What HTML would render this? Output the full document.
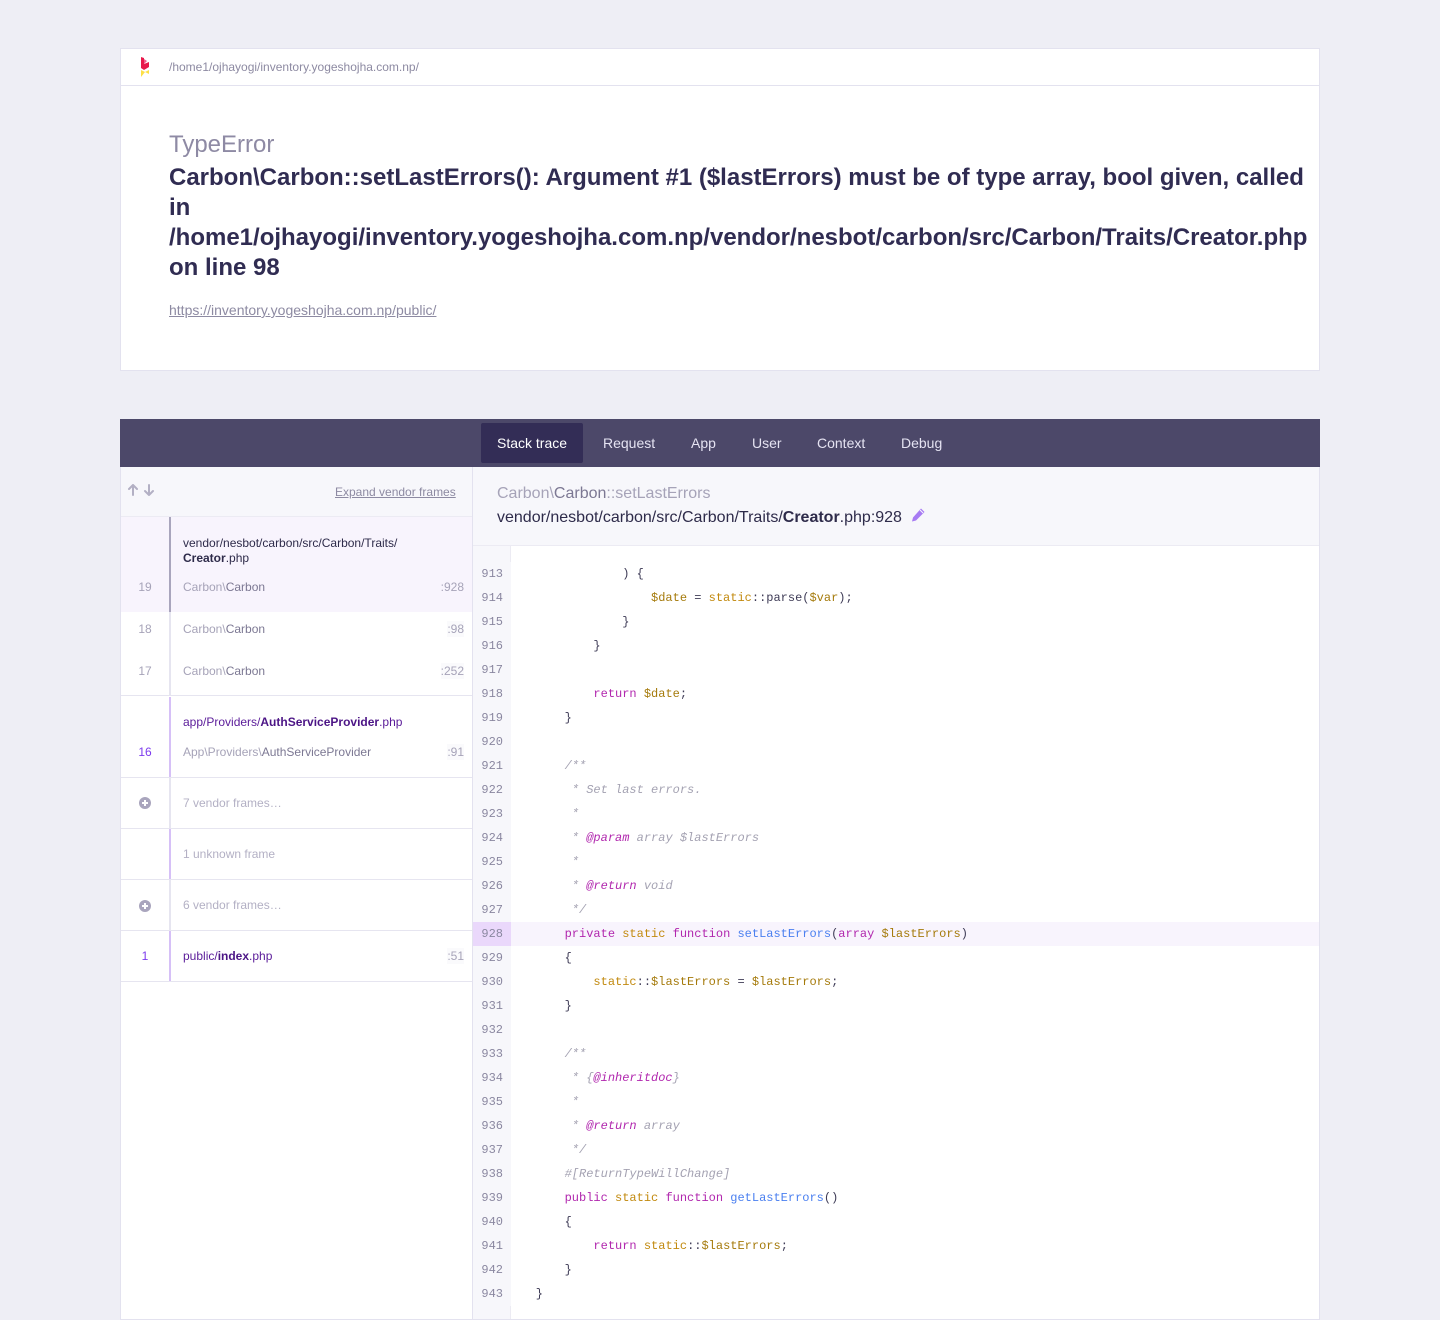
<!DOCTYPE html>
<html><head><meta charset="utf-8"><style>
*{box-sizing:border-box;margin:0;padding:0}
body{width:1440px;height:1320px;background:#eeeef5;font-family:"Liberation Sans",sans-serif;position:relative;overflow:hidden;color:#2e2b4a}
.abs{position:absolute}
.card{left:120px;top:48px;width:1200px;height:323px;background:#fff;border:1px solid #e3e2ef}
.hdr{left:0;top:0;width:1198px;height:37px;border-bottom:1px solid #e3e2ef}
.nav{left:120px;top:419px;width:1200px;height:48px;background:#4c4869}
.tab{top:4px;height:40px;line-height:40px;font-size:14px;color:#e5e3f2;padding:0 16px;white-space:nowrap}
.panel{left:120px;top:467px;width:1200px;height:853px;background:#fff;border-left:1px solid #e3e2ef;border-right:1px solid #e3e2ef;border-bottom:1px solid #e3e2ef}
.left{left:0;top:0;width:352px;height:853px;border-right:1px solid #e3e2ef}
.fr{left:0;width:351px;border-bottom:1px solid #e6e5f0;font-size:12px}
.num{position:absolute;left:0;width:48px;text-align:center;font-size:12px;color:#a6a3b8}
.bar{position:absolute;left:48px;top:0;bottom:0;width:2px;background:#e6e5f0}
.cls{position:absolute;left:62px;color:#a6a3b8}
.cls b{font-weight:normal;color:#7c7893}
.ln{position:absolute;right:8px;color:#a6a3b8;background:#fafafc;padding:1px 0}
.code{font-family:"Liberation Mono",monospace;font-size:12px}
.row{position:absolute;left:0;width:846px;height:24px;line-height:24px}
.g{position:absolute;left:0;width:38px;height:24px;background:#f7f7fb;text-align:right;padding-right:8px;color:#8a87a0}
.t{position:absolute;left:34px;white-space:pre;color:#3e3b56}
.k{color:#b127ae}.s{color:#c28a0f}.v{color:#a57a0b}.f{color:#4a7ff0}.c{color:#a4a2b2;font-style:italic}.ct{color:#b127ae;font-style:italic}
</style></head><body>

<div class="abs card">
  <div class="abs hdr">
    <svg class="abs" style="left:18px;top:8px" width="14" height="22" viewBox="0 0 14 22">
      <path d="M2 0 L5 1 L5 7 L10 5 L10 10 L5 13 L2 11 Z" fill="#e8194b"/>
      <path d="M5 2 L8 4 L5 7Z" fill="#f05a8a"/>
      <path d="M2 13 L6 15 L10 13 L10 17 L6 15 L2 20 Z" fill="#fde047"/>
    </svg>
    <div class="abs" style="left:48px;top:11px;font-size:12px;color:#8d8aa2">/home1/ojhayogi/inventory.yogeshojha.com.np/</div>
  </div>
  <div class="abs" style="left:48px;top:82px;font-size:24px;color:#8e8aa4">TypeError</div>
  <div class="abs" style="left:48px;top:114px;font-size:24px;font-weight:bold;line-height:30px;color:#302c52;width:1150px">Carbon\Carbon::setLastErrors(): Argument #1 ($lastErrors) must be of type array, bool given, called<br>in<br>/home1/ojhayogi/inventory.yogeshojha.com.np/vendor/nesbot/carbon/src/Carbon/Traits/Creator.php<br>on line 98</div>
  <div class="abs" style="left:48px;top:253px;font-size:14px;color:#8d8aa2;text-decoration:underline">https://inventory.yogeshojha.com.np/public/</div>
</div>

<div class="abs nav">
  <div class="abs tab" style="left:361px;width:102px;background:#332d56;border-radius:2px;color:#fff">Stack trace</div>
  <div class="abs tab" style="left:467px">Request</div>
  <div class="abs tab" style="left:555px">App</div>
  <div class="abs tab" style="left:616px">User</div>
  <div class="abs tab" style="left:681px">Context</div>
  <div class="abs tab" style="left:765px">Debug</div>
</div>

<div class="abs panel">
  <div class="abs left">
    <div class="abs" style="left:0;top:0;width:351px;height:50px;background:#f7f7fb;border-bottom:1px solid #ecebf3">
      <svg class="abs" style="left:6px;top:17px" width="28" height="12" viewBox="0 0 28 12" fill="none" stroke="#b3b0c4" stroke-width="2" stroke-linecap="round" stroke-linejoin="round">
        <path d="M6 11V1M2 5l4-4 4 4"/><path d="M22 1v10M18 7l4 4 4-4"/>
      </svg>
      <div class="abs" style="left:214px;top:18px;font-size:12px;color:#8d8aa2;text-decoration:underline">Expand vendor frames</div>
    </div>
    <div class="abs fr" style="top:50px;height:95px;background:#f8f4fd;border-bottom:none">
      <div class="bar" style="background:#a9a5bd"></div>
      <div class="cls" style="top:19px;color:#2e2b4a;line-height:15px">vendor/nesbot/carbon/src/Carbon/Traits/<br><b style="font-weight:bold;color:#2e2b4a">Creator</b>.php</div>
      <div class="num" style="top:63px">19</div>
      <div class="cls" style="top:63px">Carbon\<b>Carbon</b></div>
      <div class="ln" style="top:62px;background:transparent">:928</div>
    </div>
    <div class="abs fr" style="top:145px;height:84px">
      <div class="bar"></div>
      <div class="num" style="top:10px">18</div><div class="cls" style="top:10px">Carbon\<b>Carbon</b></div><div class="ln" style="top:9px">:98</div>
      <div class="num" style="top:52px">17</div><div class="cls" style="top:52px">Carbon\<b>Carbon</b></div><div class="ln" style="top:51px">:252</div>
    </div>
    <div class="abs fr" style="top:230px;height:81px">
      <div class="bar" style="background:#d6c0f7"></div>
      <div class="cls" style="top:18px;color:#5a1b99">app/Providers/<b style="font-weight:bold;color:#4c1586">AuthServiceProvider</b>.php</div>
      <div class="num" style="top:48px;color:#7c3aed">16</div>
      <div class="cls" style="top:48px">App\Providers\<b>AuthServiceProvider</b></div>
      <div class="ln" style="top:47px">:91</div>
    </div>
    <div class="abs fr" style="top:311px;height:51px">
      <div class="bar"></div>
      <svg class="abs" style="left:18px;top:19px" width="12" height="12"><circle cx="6" cy="6" r="6" fill="#a9a5bd"/><path d="M3 6h6M6 3v6" stroke="#fff" stroke-width="2"/></svg>
      <div class="cls" style="top:18px;color:#b3b0c4">7 vendor frames…</div>
    </div>
    <div class="abs fr" style="top:362px;height:51px">
      <div class="bar" style="background:#d6c0f7"></div>
      <div class="cls" style="top:18px;color:#b3b0c4">1 unknown frame</div>
    </div>
    <div class="abs fr" style="top:413px;height:51px">
      <div class="bar"></div>
      <svg class="abs" style="left:18px;top:20px" width="12" height="12"><circle cx="6" cy="6" r="6" fill="#a9a5bd"/><path d="M3 6h6M6 3v6" stroke="#fff" stroke-width="2"/></svg>
      <div class="cls" style="top:18px;color:#b3b0c4">6 vendor frames…</div>
    </div>
    <div class="abs fr" style="top:464px;height:51px">
      <div class="bar" style="background:#d6c0f7"></div>
      <div class="num" style="top:18px;color:#7c3aed">1</div>
      <div class="cls" style="top:18px;color:#5a1b99">public/<b style="font-weight:bold;color:#4c1586">index</b>.php</div>
      <div class="ln" style="top:17px">:51</div>
    </div>
  </div>

  <div class="abs" style="left:352px;top:0;width:846px;height:79px;background:#f7f7fb;border-bottom:1px solid #ecebf3">
    <div class="abs" style="left:24px;top:18px;font-size:16px;color:#a6a3b8">Carbon\<span style="color:#7c7893">Carbon</span>::setLastErrors</div>
    <div class="abs" style="left:24px;top:42px;font-size:16px;color:#2e2b4a">vendor/nesbot/carbon/src/Carbon/Traits/<b>Creator</b>.php:928</div>
    <svg class="abs" style="left:437px;top:40px" width="16" height="16" viewBox="0 0 16 16"><path d="M11 1.5l3.5 3.5L6 13.5 2 14.5 3 10.5z" fill="#a77bf3"/><path d="M10 3l3 3" stroke="#f7f7fb" stroke-width="1"/></svg>
  </div>
  <div class="abs code" style="left:352px;top:79px;width:846px;height:773px">
    <div class="abs" style="left:0;top:0;width:38px;height:773px;background:#f7f7fb;border-right:1px solid #ecebf3"></div>
    <div style="position:absolute;left:0;top:16px;width:846px">
<div class="row" style="top:0"><div class="g">913</div><div class="t">                ) {</div></div>
<div class="row" style="top:24px"><div class="g">914</div><div class="t">                    <span class="v">$date</span> = <span class="s">static</span>::parse(<span class="v">$var</span>);</div></div>
<div class="row" style="top:48px"><div class="g">915</div><div class="t">                }</div></div>
<div class="row" style="top:72px"><div class="g">916</div><div class="t">            }</div></div>
<div class="row" style="top:96px"><div class="g">917</div><div class="t"></div></div>
<div class="row" style="top:120px"><div class="g">918</div><div class="t">            <span class="k">return</span> <span class="v">$date</span>;</div></div>
<div class="row" style="top:144px"><div class="g">919</div><div class="t">        }</div></div>
<div class="row" style="top:168px"><div class="g">920</div><div class="t"></div></div>
<div class="row" style="top:192px"><div class="g">921</div><div class="t c">        /**</div></div>
<div class="row" style="top:216px"><div class="g">922</div><div class="t c">         * Set last errors.</div></div>
<div class="row" style="top:240px"><div class="g">923</div><div class="t c">         *</div></div>
<div class="row" style="top:264px"><div class="g">924</div><div class="t c">         * <span class="ct">@param</span> array $lastErrors</div></div>
<div class="row" style="top:288px"><div class="g">925</div><div class="t c">         *</div></div>
<div class="row" style="top:312px"><div class="g">926</div><div class="t c">         * <span class="ct">@return</span> void</div></div>
<div class="row" style="top:336px"><div class="g">927</div><div class="t c">         */</div></div>
<div class="row" style="top:360px;background:#f8f4fd"><div class="g" style="background:#ead8fb">928</div><div class="t">        <span class="k">private</span> <span class="s">static</span> <span class="k">function</span> <span class="f">setLastErrors</span>(<span class="k">array</span> <span class="v">$lastErrors</span>)</div></div>
<div class="row" style="top:384px"><div class="g">929</div><div class="t">        {</div></div>
<div class="row" style="top:408px"><div class="g">930</div><div class="t">            <span class="s">static</span>::<span class="v">$lastErrors</span> = <span class="v">$lastErrors</span>;</div></div>
<div class="row" style="top:432px"><div class="g">931</div><div class="t">        }</div></div>
<div class="row" style="top:456px"><div class="g">932</div><div class="t"></div></div>
<div class="row" style="top:480px"><div class="g">933</div><div class="t c">        /**</div></div>
<div class="row" style="top:504px"><div class="g">934</div><div class="t c">         * {<span class="ct">@inheritdoc</span>}</div></div>
<div class="row" style="top:528px"><div class="g">935</div><div class="t c">         *</div></div>
<div class="row" style="top:552px"><div class="g">936</div><div class="t c">         * <span class="ct">@return</span> array</div></div>
<div class="row" style="top:576px"><div class="g">937</div><div class="t c">         */</div></div>
<div class="row" style="top:600px"><div class="g">938</div><div class="t c">        #[ReturnTypeWillChange]</div></div>
<div class="row" style="top:624px"><div class="g">939</div><div class="t">        <span class="k">public</span> <span class="s">static</span> <span class="k">function</span> <span class="f">getLastErrors</span>()</div></div>
<div class="row" style="top:648px"><div class="g">940</div><div class="t">        {</div></div>
<div class="row" style="top:672px"><div class="g">941</div><div class="t">            <span class="k">return</span> <span class="s">static</span>::<span class="v">$lastErrors</span>;</div></div>
<div class="row" style="top:696px"><div class="g">942</div><div class="t">        }</div></div>
<div class="row" style="top:720px"><div class="g">943</div><div class="t">    }</div></div>
    </div>
  </div>
</div>
</body></html>
